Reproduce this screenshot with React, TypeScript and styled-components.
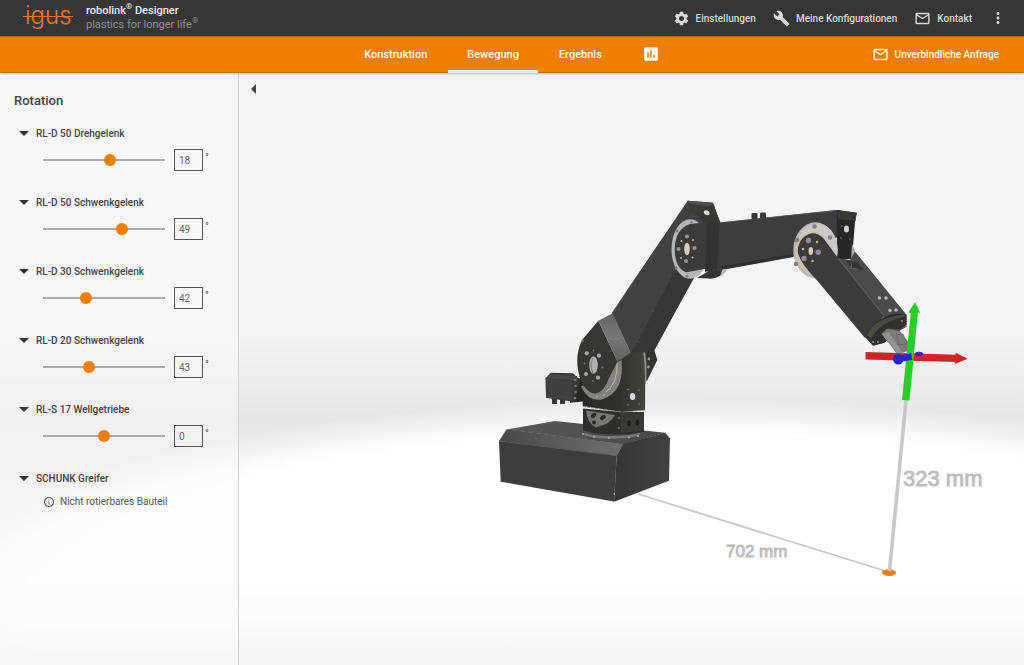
import React, { useState } from 'react';
import styled, { createGlobalStyle } from 'styled-components';
import {
  MdSettings,
  MdBuild,
  MdMailOutline,
  MdMoreVert,
  MdAssessment,
  MdInfoOutline,
} from 'react-icons/md';

const orange = '#f07e00';

const GlobalStyle = createGlobalStyle`
  *, *::before, *::after { box-sizing: border-box; }
  body {
    margin: 0;
    font-family: Roboto, "Liberation Sans", sans-serif;
    font-size: 11px;
    color: #444;
  }
  button, input { font: inherit; color: inherit; }
`;

const Page = styled.div`
  display: flex;
  flex-direction: column;
  min-height: 100vh;
`;

const TopBar = styled.header`
  display: flex;
  align-items: center;
  height: 36px;
  padding: 0 17px 0 22px;
  background: #363636;
  color: #d9d9d9;
`;

const Logo = styled.svg`
  display: block;
  width: 52px;
  height: 36px;
  margin-right: 12px;
`;

const Brand = styled.div`
  flex: 1;
  line-height: 14px;
  white-space: nowrap;
  sup {
    font-size: 8px;
    line-height: 0;
  }
`;

const ProductName = styled.div`
  font-weight: 500;
  color: #f2f2f2;
`;

const Slogan = styled.div`
  color: #929292;
`;

const TopLinks = styled.nav`
  display: flex;
  align-items: center;
  gap: 17px;
`;

const IconLink = styled.a`
  display: flex;
  align-items: center;
  gap: 6px;
  font-size: 10px;
  font-weight: 500;
  color: inherit;
  text-decoration: none;
  white-space: nowrap;
`;

const MoreButton = styled.button`
  display: flex;
  padding: 0;
  border: 0;
  background: none;
`;

const NavBar = styled.nav`
  position: relative;
  display: grid;
  grid-template-columns: 1fr auto 1fr;
  align-items: center;
  height: 37px;
  background: ${orange};
  color: #fff;
  box-shadow: inset 0 2px 1px -1px rgba(0, 0, 0, 0.25), inset 0 -1px 0 rgba(110, 100, 80, 0.45),
    0 1px 2px rgba(0, 0, 0, 0.25);
`;

const Tabs = styled.div`
  grid-column: 2;
  display: flex;
  gap: 2px;
`;

const Tab = styled.button<{ $active?: boolean }>`
  display: flex;
  align-items: center;
  justify-content: center;
  height: 37px;
  padding: 2px 19px 0;
  border: 0;
  border-bottom: 3px solid ${(p) => (p.$active ? '#ececec' : 'transparent')};
  background: none;
  font-weight: 500;
  color: #fff;
`;

const Inquiry = styled.div`
  display: flex;
  justify-content: flex-end;
  padding-right: 25px;
`;

const Workspace = styled.div`
  flex: 1;
  display: flex;
  background:
    linear-gradient(to bottom, rgba(243, 243, 243, 0) 86%, rgba(243, 243, 243, 0.95) 100%),
    radial-gradient(ellipse 76% 36% at 66% 91%, #fff 84%, rgba(255, 255, 255, 0) 100%),
    linear-gradient(to bottom, #f4f4f4 0%, #f4f4f4 44%, #e7e7e7 58%, #ededed 70%, #f3f3f3 100%);
`;

const Sidebar = styled.aside`
  flex: none;
  width: 239px;
  padding: 20px 14px;
  border-right: 1px solid #d2d2d2;
  background: rgba(250, 250, 250, 0.45);
`;

const Heading = styled.h2`
  margin: 0 0 18px;
  font-size: 13px;
  font-weight: 500;
  line-height: 15px;
`;

const Joint = styled.section`
  margin-bottom: 24px;
`;

const JointTitle = styled.button`
  display: flex;
  align-items: center;
  gap: 7px;
  height: 15px;
  padding: 0 5px;
  border: 0;
  background: none;
  font-size: 10px;
  font-weight: 500;
`;

const Triangle = styled.span<{ $open: boolean }>`
  border: 5px solid transparent;
  border-top-color: #333;
  border-bottom-width: 0;
  transform: rotate(${(p) => (p.$open ? 0 : -90)}deg);
`;

const Controls = styled.div`
  display: flex;
  align-items: center;
  margin: 8px 0 0 29px;
`;

const Slider = styled.input`
  appearance: none;
  width: 122px;
  height: 12px;
  margin: 0 9px 0 0;
  background: linear-gradient(#aaa, #aaa) center / 100% 2px no-repeat;
  &::-webkit-slider-thumb {
    appearance: none;
    width: 12px;
    height: 12px;
    border-radius: 50%;
    background: ${orange};
  }
`;

const Angle = styled.input`
  width: 29px;
  height: 22px;
  padding: 0 4px;
  border: 1px solid #555;
  background: transparent;
  font-size: 10px;
  color: #666;
`;

const Degree = styled.span`
  align-self: flex-start;
  margin-left: 2px;
  font-size: 10px;
  line-height: 18px;
`;

const Note = styled.p`
  display: flex;
  align-items: center;
  gap: 5px;
  margin: 9px 0 0 29px;
  font-size: 10px;
  line-height: 14px;
  color: #555;
`;

const Stage = styled.main`
  position: relative;
  flex: 1;
  min-width: 0;
  display: flex;
`;

const Scene = styled.svg`
  flex: 1;
  min-width: 0;
  display: block;
`;

const Collapse = styled.button`
  position: absolute;
  top: 7px;
  left: 8px;
  padding: 4px;
  border: 0;
  background: none;
  &::before {
    content: '';
    display: block;
    border: 5px solid transparent;
    border-right-color: #444;
    border-left-width: 0;
  }
`;

type JointData = { name: string; value: number; min: number; max: number };

const joints: JointData[] = [
  { name: 'RL-D 50 Drehgelenk', value: 18, min: -180, max: 180 },
  { name: 'RL-D 50 Schwenkgelenk', value: 49, min: -150, max: 150 },
  { name: 'RL-D 30 Schwenkgelenk', value: 42, min: 0, max: 125 },
  { name: 'RL-D 20 Schwenkgelenk', value: 43, min: 0, max: 118 },
  { name: 'RL-S 17 Wellgetriebe', value: 0, min: -180, max: 180 },
];

function JointControl({ joint }: { joint: JointData }) {
  const [value, setValue] = useState(joint.value);
  const [open, setOpen] = useState(true);
  const change = (e: React.ChangeEvent<HTMLInputElement>) => setValue(Number(e.target.value) || 0);
  return (
    <Joint>
      <JointTitle aria-expanded={open} onClick={() => setOpen(!open)}>
        <Triangle $open={open} />
        {joint.name}
      </JointTitle>
      {open && (
        <Controls>
          <Slider
            type="range"
            aria-label={joint.name}
            min={joint.min}
            max={joint.max}
            value={value}
            onChange={change}
          />
          <Angle aria-label={`${joint.name} Winkel`} value={value} onChange={change} />
          <Degree>°</Degree>
        </Controls>
      )}
    </Joint>
  );
}

function Bolts({ at, r = 1.8, fill = '#9b949b' }: { at: number[][]; r?: number; fill?: string }) {
  return (
    <g fill={fill}>
      {at.map(([x, y]) => (
        <circle key={`${x},${y}`} cx={x} cy={y} r={r} />
      ))}
    </g>
  );
}

function RobotScene() {
  return (
    <Scene viewBox="239 73 785 592" role="img" aria-label="Roboterarm">
      <defs>
        <linearGradient id="bevel" x1="0" x2="1">
          <stop offset="0" stopColor="#484848" />
          <stop offset="1" stopColor="#707070" />
        </linearGradient>
        <linearGradient id="top" x1="0" x2="1">
          <stop offset="0" stopColor="#5a5a5a" />
          <stop offset="1" stopColor="#484848" />
        </linearGradient>
        <linearGradient id="side" x1="0" x2="1">
          <stop offset="0" stopColor="#353535" />
          <stop offset="1" stopColor="#414141" />
        </linearGradient>
        <linearGradient id="column" x1="0" x2="1">
          <stop offset="0" stopColor="#292927" />
          <stop offset=".6" stopColor="#31312d" />
          <stop offset="1" stopColor="#44443f" />
        </linearGradient>
        <linearGradient id="band" x1="0" y1="0" x2="0" y2="1">
          <stop offset="0" stopColor="#666" />
          <stop offset=".5" stopColor="#777" />
          <stop offset="1" stopColor="#606060" />
        </linearGradient>
      </defs>

      {/* measuring lines */}
      <path d="M638 494 887 571.500" stroke="#c5c5c5" strokeWidth="1.8" />
      <ellipse cx="889" cy="572.7" rx="7" ry="3.4" fill="#f07e00" />
      <path d="M906 400 889.500 571" stroke="#c8c8c8" strokeWidth="3.6" />
      <g fontFamily="'Liberation Sans', Arial, sans-serif" fill="#bdbdbd" stroke="#bdbdbd" strokeWidth=".9">
        <text x="726" y="557" fontSize="17">702 mm</text>
        <text x="903" y="486" fontSize="22">323 mm</text>
      </g>

      {/* base */}
      <path d="M555 421 506.700 429.500 623 444.500 665 432.700Z" fill="url(#top)" />
      <path d="M506.700 429.300 499 441 616.500 456 623 444Z" fill="url(#bevel)" />
      <path d="M499 441 500.700 481.700 614 501.500 616.700 455.700Z" fill="#3d3d3d" />
      <path d="M623 444 616.700 455.700 614 501.700 669 480.700 670 438.300 665 432.700Z" fill="url(#side)" />
      <path d="M499 441 616.500 455.700 623 444" stroke="#595959" strokeWidth=".6" fill="none" />
      <path d="M615 462V499" stroke="#4d4d4d" strokeWidth=".5" />
      <Bolts at={[[614.3, 494]]} r={0.8} fill="#ddd" />

      {/* turntable */}
      <ellipse cx="612" cy="434" rx="28" ry="4.500" fill="#777876" />
      <ellipse cx="612" cy="432" rx="27" ry="4" fill="#4a4a48" />
      <Bolts at={[[583, 434], [594, 437], [609, 438], [629, 437.5], [638, 436]]} r={1} fill="#b5a9b1" />
      <path d="M583 408.500 621 412 644 412V431.500Q630 435 617 434.500 598 435 583 430.500Z" fill="#2e2e2b" />
      <path d="M586 410.500 615 415Q611 424 596 427.500 587 423 586 410.500Z" fill="#777975" />
      <g fill="#292927">
        <ellipse cx="593.500" cy="415.500" rx="3.200" ry="2" transform="rotate(-45 593.500 415.500)" />
        <ellipse cx="603" cy="417.500" rx="3.200" ry="2" transform="rotate(-40 603 417.500)" />
        <ellipse cx="594" cy="422.500" rx="2" ry="2" />
      </g>
      <path d="M621 413 644 412V430.500L621 433Z" fill="#383834" />
      <g fill="#1c1c1b" stroke="#555" strokeWidth=".5">
        <ellipse cx="629" cy="423.500" rx="2.500" ry="3.700" />
        <ellipse cx="637.500" cy="422.500" rx="2.500" ry="3.700" />
      </g>
      <Bolts at={[[619, 418], [619, 428]]} r={0.8} />

      {/* drive motor */}
      <path d="M552 396h5v8h-5zM560 396h5v8h-5z" fill="#343434" />
      <path d="M570 379 583 378V401.500L570 402.700Z" fill="#272725" />
      <path d="M545.700 378.300 550.700 372.700 573 373.300 580 380 575 402 546 397.700Z" fill="#373737" />
      <path d="M545.700 378.300 550.700 374 577 376V382L572 380Z" fill="#494949" />
      <path d="M545.700 378.500 572 381V400.500L546 397.700Z" fill="#404040" />
      <Bolts at={[[575, 380], [575.5, 386], [575.5, 392], [575, 398]]} r={1.3} fill="#827684" />

      {/* lower joint housing */}
      <path d="M644 347 654 349 657.300 360 646.500 382Z" fill="#333331" />
      <Bolts at={[[649, 359], [648.5, 367]]} r={1.4} />
      <path d="M643 346Q648.500 361 645.500 384L642 386Z" fill="#929290" />
      <path d="M621.700 358 633 347 642 346Q646 360 645 410L622 412 582.700 406V385Z" fill="url(#column)" />
      <path d="M583 406.500 622 412.300 645 410" stroke="#75756f" strokeWidth=".8" strokeDasharray="3 1" fill="none" />
      <ellipse cx="632.600" cy="396.500" rx="2.700" ry="3.600" fill="#d3dcea" />
      <Bolts at={[[628, 389.5], [639, 390], [628, 405], [639, 404]]} r={0.7} />

      {/* lower arm */}
      <path d="M687.700 200.700 631.700 283.300 611.700 313.300 630.700 353 653.500 351.700 693 278 720 223 713 202.700Z" fill="#424242" />
      <path d="M675 270 635 347 631 353 653.500 351.700 694 278Z" fill="#363636" />
      <path d="M687.700 200.700 713 203.500 720.700 223 706 228 694 212 683 222 689 207Z" fill="#3d3e3a" />
      <path d="M687.700 200.700 713 202.700 715 207 691 204Z" fill="#50514c" />
      <path d="M695 213 706 223 720 223 713 204Z" fill="#373834" />
      <ellipse cx="706.700" cy="212.700" rx="3" ry="2.200" fill="#dedede" transform="rotate(25 706.700 212.700)" />
      <path d="M651 311h4M638 342h3M672 276h3" stroke="#606060" strokeWidth=".6" />

      {/* lower joint plate */}
      <path d="M621.500 360Q625 392 602 399.500 588 402 581 386L604 384 615 363Z" fill="#828280" />
      <path d="M617 363Q618 383 606 392" fill="none" stroke="#cbb892" strokeWidth="1" />
      <path d="M598.300 320.700 582 340Q573 359 581 381 587 394 596 393.500 604 392 609 378L617.500 361.500Z" fill="#363635" />
      <path d="M598.300 320.700 612.700 313.300 630.700 352.700 617.500 361.700Z" fill="url(#band)" />
      <ellipse cx="593.500" cy="365" rx="4.300" ry="8.700" fill="#aeb1b0" />
      <path d="M593 358Q589 365 593 373" stroke="#777" fill="none" />
      <Bolts at={[[586.7, 353.3], [599, 355.7], [586, 374], [598, 377.7]]} r={2.1} fill="#aba4ab" />
      <Bolts at={[[593.5, 350.5], [584.5, 363.5], [602.5, 367.5], [593, 381], [583, 341], [583, 387]]} r={0.9} fill="#777" />
      <Bolts at={[[597, 397], [604, 395], [610, 389], [615, 380]]} r={1.2} fill="#a799a9" />

      {/* elbow */}
      <ellipse cx="690" cy="249" rx="18.500" ry="29.800" fill="#b7b7b7" />
      <path d="M697 278 712 269 728 267Q720 280 708 278.500Z" fill="#353535" />
      <path d="M720 277Q726 273 728 267L723 267Z" fill="#b9b9b9" />
      <path d="M709 222 690 224Q675 229 674.700 249.300 675 269 686.700 272.300L712 267.500V222Z" fill="#3b3b3b" />
      <path d="M706.700 222.500H720L836.700 210 848 213 840 236 793 256.700 727 268.500 712 272 705 268Z" fill="#3d3d3d" />
      <path d="M706.700 222.500 719.500 222 717 269 705 272Z" fill="#323232" />
      <path d="M719 223 836.700 210.500" stroke="#555" strokeWidth=".8" />
      <path d="M718 267 793 254V257L727 269Z" fill="#303030" />
      <rect x="751.500" y="213" width="6" height="6.500" rx="1" fill="#3a3a3a" />
      <rect x="760" y="212.500" width="6" height="6" rx="1" fill="#3a3a3a" />
      <ellipse cx="687" cy="249" rx="2.800" ry="6.200" fill="#d8ceb9" />
      <Bolts at={[[687, 236.5], [678.5, 249], [694.5, 248], [686, 261]]} r={2.1} fill="#99909a" />
      <Bolts at={[[681.5, 241], [693, 240], [681, 258], [692.5, 257.5]]} r={1} fill="#c6b791" />
      <Bolts at={[[691.5, 222.5], [687, 276], [676, 268], [677, 231]]} r={1.5} fill="#857e85" />

      {/* wrist */}
      <path d="M836.700 210 856.700 212.700 855 221.700 852 259 837 259Z" fill="#272725" />
      <path d="M836.700 210 856.700 212.700 855.500 221 838 219Z" fill="#373733" />
      <ellipse cx="846.500" cy="229" rx="2.500" ry="3.500" fill="#c9d0d9" />
      <Bolts at={[[841, 238], [850, 239], [842, 226]]} r={0.7} />
      <path d="M852 244 855 251 851 260Z" fill="#aaa" />
      <ellipse cx="815.500" cy="250.300" rx="22.200" ry="28" fill="#b9b9b8" />
      <ellipse cx="817" cy="249.500" rx="20.500" ry="26" fill="#c9c9c9" />
      <ellipse cx="812.500" cy="251.700" rx="17" ry="20.500" fill="#cdc2aa" />
      <path d="M838 258 850 260 855 251.500 906.700 315 883 317Z" fill="#4b4b4b" />
      <path d="M846 261 857 262 864 270 852 268Z" fill="#333" />
      <path d="M852 262 851 268 858 269" fill="none" stroke="#777" strokeWidth=".6" />
      <path d="M811.700 233.300Q798 237 797.700 252 800 263 816.700 280L865 338 884 316 838 258 824 239Q819 233 811.700 233.300Z" fill="#3c3c3c" />
      <path d="M838 258 884 316" stroke="#707070" strokeWidth=".8" />
      <ellipse cx="810.800" cy="251" rx="2.300" ry="4" fill="#d5c8af" />
      <Bolts at={[[808.5, 240.5], [818.3, 252.3], [804, 258.5]]} r={2.7} fill="#958b96" />
      <Bolts at={[[817, 242], [803, 249], [812.5, 261]]} r={1.3} fill="#c6b791" />
      <Bolts at={[[814.5, 226.5], [830, 237.5], [797, 240], [796, 264]]} r={2.3} fill="#877f85" />
      <Bolts at={[[879.5, 298], [886, 298], [890, 310.5], [896, 310]]} r={1.8} fill="#bbb5bb" />

      {/* flange and gripper */}
      <path d="M884 317Q895 311 906.700 315V325L884 343 873 345.700 865 337Q870 325 884 317Z" fill="#2f2f2d" />
      <path d="M867 335Q873 318 906 314L905 317Q880 321 871 339Z" fill="#4b4b45" />
      <path d="M881 334 887 329 900 330 907 326" stroke="#555" fill="none" />
      <Bolts at={[[873, 342], [902, 321], [878, 342]]} r={1} />
      <path d="M881.700 334 887 329 900 331 914 350 897 353.500Z" fill="#7b7b7b" />
      <path d="M881.700 334 890 332 904 353 896.700 353.500Z" fill="#929292" />
      <path d="M896 335 903 334 907 344 899 345ZM890 333 903 352" fill="none" stroke="#626262" strokeWidth=".8" />

      {/* coordinate axes */}
      <path d="M865.500 352 957 354.700V362L865.500 359.500Z" fill="#cc2525" />
      <path d="M955.700 352.700 967.700 358.700 955 364Z" fill="#cc2525" />
      <ellipse cx="919" cy="354" rx="4" ry="2.300" fill="#2824c8" />
      <path d="M911 311 918 311.500 909.500 400.500 902 400Z" fill="#27ce27" />
      <path d="M915 302 908.300 312.700 920.200 312.700Z" fill="#27ce27" />
      <path d="M898 359 911.700 356.500" stroke="#2824c8" strokeWidth="6.500" />
      <circle cx="898.300" cy="359.200" r="5.300" fill="#2824c8" />
    </Scene>
  );
}

export default function App() {
  return (
    <Page>
      <GlobalStyle />
      <TopBar>
        <Logo viewBox="0 0 52 36" role="img" aria-label="igus">
          <text x="3" y="24" fontFamily="Inter, sans-serif" fontSize="24" fontWeight="300" fill="#e8772a">
            igus
          </text>
          <path d="M1 16.500H51" stroke="#e8772a" strokeWidth="1" />
        </Logo>
        <Brand>
          <ProductName>
            robolink<sup>®</sup> Designer
          </ProductName>
          <Slogan>
            plastics for longer life<sup>®</sup>
          </Slogan>
        </Brand>
        <TopLinks>
          <IconLink href="#einstellungen">
            <MdSettings size={17} />
            Einstellungen
          </IconLink>
          <IconLink href="#konfigurationen">
            <MdBuild size={17} />
            Meine Konfigurationen
          </IconLink>
          <IconLink href="#kontakt">
            <MdMailOutline size={17} />
            Kontakt
          </IconLink>
          <MoreButton aria-label="Mehr">
            <MdMoreVert size={18} />
          </MoreButton>
        </TopLinks>
      </TopBar>
      <NavBar>
        <Tabs>
          <Tab>Konstruktion</Tab>
          <Tab $active>Bewegung</Tab>
          <Tab>Ergebnis</Tab>
          <Tab aria-label="Auswertung">
            <MdAssessment size={18} />
          </Tab>
        </Tabs>
        <Inquiry>
          <IconLink href="#anfrage">
            <MdMailOutline size={17} />
            Unverbindliche Anfrage
          </IconLink>
        </Inquiry>
      </NavBar>
      <Workspace>
        <Sidebar>
          <Heading>Rotation</Heading>
          {joints.map((joint) => (
            <JointControl key={joint.name} joint={joint} />
          ))}
          <Joint>
            <JointTitle aria-expanded>
              <Triangle $open />
              SCHUNK Greifer
            </JointTitle>
            <Note>
              <MdInfoOutline size={12} />
              Nicht rotierbares Bauteil
            </Note>
          </Joint>
        </Sidebar>
        <Stage>
          <Collapse aria-label="Seitenleiste einklappen" />
          <RobotScene />
        </Stage>
      </Workspace>
    </Page>
  );
}
